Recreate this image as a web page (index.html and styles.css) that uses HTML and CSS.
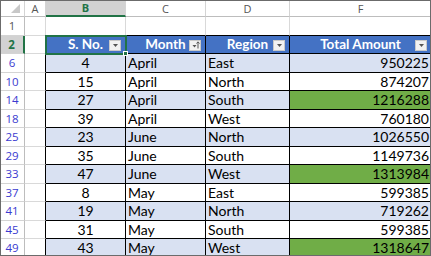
FILE: index.html
```html
<!DOCTYPE html>
<html>
<head>
<meta charset="utf-8">
<link rel="stylesheet" href="styles.css">
</head>
<body>
<div class="sheet">
  <div class="corner"><svg width="25" height="17"><polygon points="20,4 20,13 11,13" fill="#c8c8c8"/></svg></div>
  <div class="ch">A</div>
  <div class="ch sel">B</div>
  <div class="ch">C</div>
  <div class="ch">D</div>
  <div class="ch last">F</div>

  <div class="rh">1</div>
  <div class="g"></div>
  <div class="g tb"></div>
  <div class="g tb"></div>
  <div class="g tb"></div>
  <div class="g tb last"></div>

  <div class="rh rsel">2</div>
  <div class="g tl"></div>
  <div class="h active">S. No.<span class="dd"><svg width="11" height="10"><polygon points="3,4 8,4 5.5,7" fill="#555"/></svg></span><span class="handle"></span></div>
  <div class="h">Month<span class="dd"><svg width="11" height="10"><path d="M2.5 5 L6.5 5 L4.5 7.5 Z" fill="#555"/><path d="M8 8.5 V2 M6.5 3.5 L8 1.8 L9.5 3.5" stroke="#555" stroke-width="1" fill="none"/></svg></span></div>
  <div class="h">Region<span class="dd"><svg width="11" height="10"><polygon points="3,4 8,4 5.5,7" fill="#555"/></svg></span></div>
  <div class="h last">Total Amount<span class="dd"><svg width="11" height="10"><polygon points="3,4 8,4 5.5,7" fill="#555"/></svg></span></div>

  <div class="rh f">6</div><div class="g tl"></div><div class="c b ctr">4</div><div class="c b">April</div><div class="c b">East</div><div class="c b num last">950225</div>
  <div class="rh f">10</div><div class="g tl"></div><div class="c ctr">15</div><div class="c">April</div><div class="c">North</div><div class="c num last">874207</div>
  <div class="rh f">14</div><div class="g tl"></div><div class="c b ctr">27</div><div class="c b">April</div><div class="c b">South</div><div class="c gr num last">1216288</div>
  <div class="rh f">18</div><div class="g tl"></div><div class="c ctr">39</div><div class="c">April</div><div class="c">West</div><div class="c num last">760180</div>
  <div class="rh f">25</div><div class="g tl"></div><div class="c b ctr">23</div><div class="c b">June</div><div class="c b">North</div><div class="c b num last">1026550</div>
  <div class="rh f">29</div><div class="g tl"></div><div class="c ctr">35</div><div class="c">June</div><div class="c">South</div><div class="c num last">1149736</div>
  <div class="rh f">33</div><div class="g tl"></div><div class="c b ctr">47</div><div class="c b">June</div><div class="c b">West</div><div class="c gr num last">1313984</div>
  <div class="rh f">37</div><div class="g tl"></div><div class="c ctr">8</div><div class="c">May</div><div class="c">East</div><div class="c num last">599385</div>
  <div class="rh f">41</div><div class="g tl"></div><div class="c b ctr">19</div><div class="c b">May</div><div class="c b">North</div><div class="c b num last">719262</div>
  <div class="rh f">45</div><div class="g tl"></div><div class="c ctr">31</div><div class="c">May</div><div class="c">South</div><div class="c num last">599385</div>
  <div class="rh f">49</div><div class="g tl"></div><div class="c b ctr">43</div><div class="c b">May</div><div class="c b">West</div><div class="c gr num last">1318647</div>
  <div class="frame"></div>
</div>
</body>
</html>
```

FILE: styles.css
```css
* { box-sizing: border-box; }
html, body { margin: 0; padding: 0; background: #fff; }
.sheet {
  position: relative;
  width: 431px;
  height: 256px;
  overflow: hidden;
  display: grid;
  grid-template-columns: 25px 21px 80px 80px 84px 141px;
  grid-template-rows: 17px repeat(13, 18.5px);
  font-family: Lato, "Liberation Sans", sans-serif;
  font-size: 14px;
  color: #000;
}
.corner { background: #fff; border-right: 1px solid #d4d4d4; border-bottom: 1px solid #bdbdbd; }
.corner svg { display: block; }
.ch {
  background: #fff;
  border-right: 1px solid #d4d4d4;
  border-bottom: 1px solid #bdbdbd;
  font-family: "Open Sans", "Noto Sans", sans-serif;
  font-size: 11px;
  color: #555;
  display: flex; align-items: center; justify-content: center;
}
.ch.sel { background: #d2d2d2; color: #217346; font-weight: bold; border-bottom: 2px solid #217346; }
.rh {
  background: #fff;
  border-right: 1px solid #bdbdbd;
  border-bottom: 1px solid #d4d4d4;
  font-family: "Open Sans", "Noto Sans", sans-serif;
  font-size: 11.5px;
  color: #555;
  display: flex; align-items: center; justify-content: center;
}
.rh.rsel { background: #d2d2d2; color: #217346; font-weight: bold; border-right: 2px solid #217346; }
.rh.f { color: #3b3bd0; }
.g { border-right: 1px solid #d9d9d9; border-bottom: 1px solid #d9d9d9; }
.g.tb { border-bottom: 1px solid #000; }
.g.tl { border-right: 1px solid #000; }
.last { border-right: none !important; }
.h {
  position: relative;
  background: #4472c4;
  color: #fff;
  font-weight: bold;
  font-size: 13.5px;
  border-right: 1px solid #000;
  border-bottom: 1px solid #000;
  display: flex; align-items: center; justify-content: center;
}
.h.active { outline: 2px solid #217346; outline-offset: -1px; z-index: 2; }
.dd {
  position: absolute;
  right: 4px; top: 4px;
  width: 12px; height: 11px;
  background: #f2f2f2;
  border: 1px solid #c9c9c9;
  display: flex; align-items: center; justify-content: center;
}
.dd svg { display: block; }
.handle {
  position: absolute;
  right: -3px; bottom: -3px;
  width: 5px; height: 5px;
  background: #217346;
  border: 1px solid #fff;
}
.c {
  border-right: 1px solid #000;
  border-bottom: 1px solid #000;
  display: flex; align-items: center;
  padding: 0 2px;
  white-space: nowrap;
}
.c.b { background: #d9e1f2; }
.c.gr { background: #70ad47; }
.ctr { justify-content: center; }
.num { justify-content: flex-end; padding-right: 2px; }
.frame {
  position: absolute;
  inset: 0;
  border: 1px solid #6b6b6b;
  pointer-events: none;
}
```
